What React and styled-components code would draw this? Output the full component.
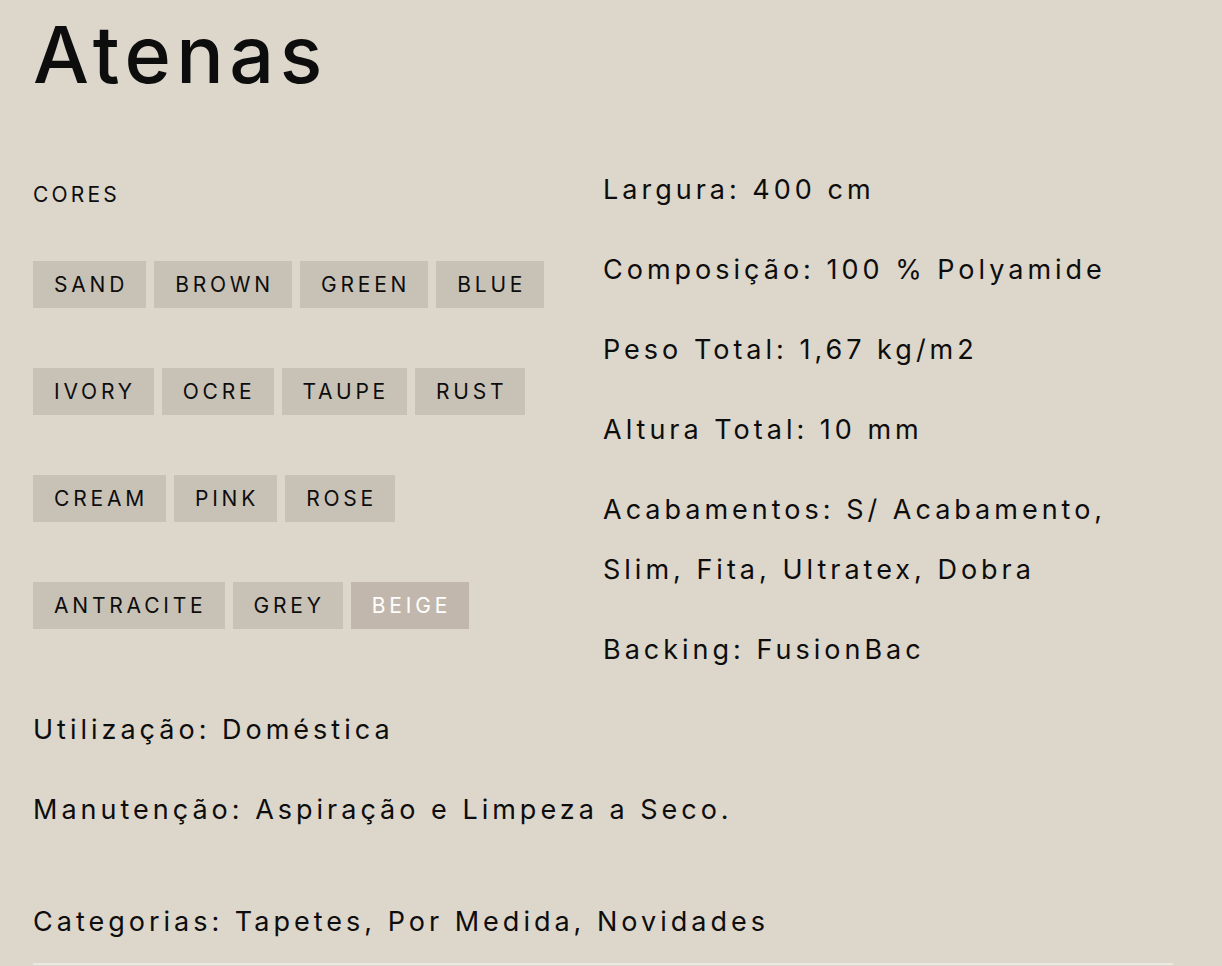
import React from 'react';
import styled, { createGlobalStyle } from 'styled-components';

const GlobalStyle = createGlobalStyle`
  html, body {
    margin: 0;
    padding: 0;
    background: #dcd6cb;
  }
  body {
    font-family: Inter, "Noto Sans", sans-serif;
    color: #0d0d0d;
  }
`;

const Page = styled.div`
  width: 1140px;
  padding: 0 49px 0 33px;
`;

const Title = styled.h1`
  margin: 0;
  padding-top: 8px;
  font-size: 79px;
  font-weight: 500;
  line-height: 92px;
  letter-spacing: 5.5px;
`;

const Columns = styled.div`
  display: grid;
  grid-template-columns: 570px 570px;
  margin-top: 60px;
`;

const Colors = styled.div`
  display: flex;
  flex-direction: column;
`;

const Label = styled.div`
  font-size: 21px;
  line-height: 30px;
  letter-spacing: 3.2px;
  text-transform: uppercase;
  margin-top: 20px;
`;

const ChipRow = styled.div`
  display: flex;
  gap: 8px;
  margin-top: ${({ first }) => (first ? '51px' : '60px')};
`;

const Chip = styled.span`
  height: 47px;
  padding: 0 18px 0 21px;
  display: flex;
  align-items: center;
  font-size: 21px;
  letter-spacing: 3.8px;
  text-transform: uppercase;
  background: ${({ active }) => (active ? '#c1b7ac' : '#c8c1b6')};
  color: ${({ active }) => (active ? '#ffffff' : '#0d0d0d')};
`;

const Specs = styled.div`
  display: flex;
  flex-direction: column;
  gap: 20px;
`;

const Spec = styled.p`
  margin: 0;
  font-size: 27px;
  line-height: 60px;
  letter-spacing: 4px;
`;

const Footer = styled.div`
  display: flex;
  flex-direction: column;
  gap: 20px;
  margin-top: 20px;
`;

const Categories = styled(Spec)`
  margin-top: 52px;
  padding-bottom: 11px;
  border-bottom: 2px solid #ebe7e1;
`;

const colorRows = [
  ['Sand', 'Brown', 'Green', 'Blue'],
  ['Ivory', 'Ocre', 'Taupe', 'Rust'],
  ['Cream', 'Pink', 'Rose'],
  ['Antracite', 'Grey', 'Beige'],
];

const specs = [
  'Largura: 400 cm',
  'Composição: 100 % Polyamide',
  'Peso Total: 1,67 kg/m2',
  'Altura Total: 10 mm',
  'Acabamentos: S/ Acabamento, Slim, Fita, Ultratex, Dobra',
  'Backing: FusionBac',
];

export default function App() {
  return (
    <Page>
      <GlobalStyle />
      <Title>Atenas</Title>
      <Columns>
        <Colors>
          <Label>Cores</Label>
          {colorRows.map((row, i) => (
            <ChipRow key={i} first={i === 0}>
              {row.map((name) => (
                <Chip key={name} active={name === 'Beige'}>
                  {name}
                </Chip>
              ))}
            </ChipRow>
          ))}
        </Colors>
        <Specs>
          {specs.map((s) => (
            <Spec key={s}>{s}</Spec>
          ))}
        </Specs>
      </Columns>
      <Footer>
        <Spec>Utilização: Doméstica</Spec>
        <Spec>Manutenção: Aspiração e Limpeza a Seco.</Spec>
      </Footer>
      <Categories>Categorias: Tapetes, Por Medida, Novidades</Categories>
    </Page>
  );
}
